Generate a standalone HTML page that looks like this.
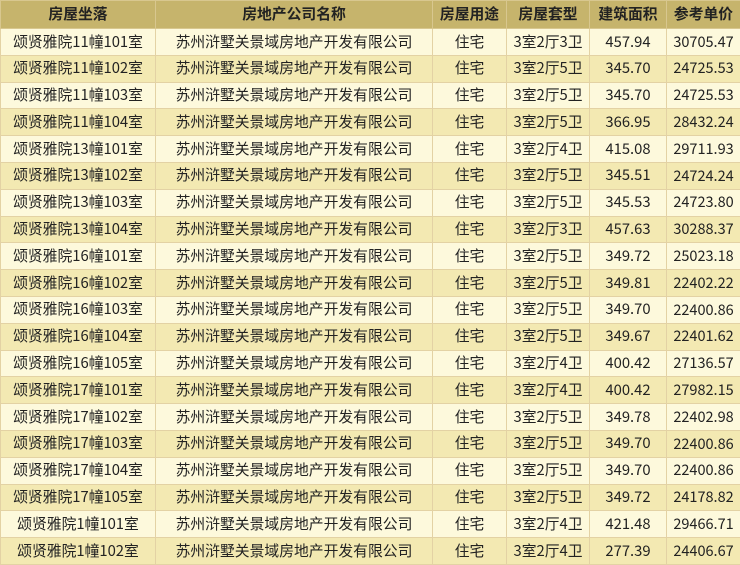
<!DOCTYPE html>
<html><head><meta charset="utf-8"><style>
body{margin:0;width:740px;height:559px;overflow:hidden;background:#fdf9dc;font-family:"Noto Sans CJK SC","Liberation Sans",sans-serif;}
table{border-collapse:collapse;table-layout:fixed;width:740px;position:absolute;left:0;top:0}
td,th{border:1px solid #e3d2a4;text-align:center;font-size:14.8px;color:#222;padding:0;white-space:nowrap;line-height:1}
td:last-child{font-size:14.5px}
th{background:#c6b46c;height:27px;font-weight:bold;color:#222;border-color:#d8c78f}
td{height:25.8px}
tr:nth-child(even) td{background:#fdf9dc}
tr:nth-child(odd) td{background:#f3e9b2}
</style></head><body>
<table>
<colgroup><col style="width:155px"><col style="width:277px"><col style="width:74px"><col style="width:83px"><col style="width:77px"><col style="width:74px"></colgroup>
<tr><th>房屋坐落</th><th>房地产公司名称</th><th>房屋用途</th><th>房屋套型</th><th>建筑面积</th><th>参考单价</th></tr>
<tr><td>颂贤雅院11幢101室</td><td>苏州浒墅关景域房地产开发有限公司</td><td>住宅</td><td>3室2厅3卫</td><td>457.94</td><td>30705.47</td></tr>
<tr><td>颂贤雅院11幢102室</td><td>苏州浒墅关景域房地产开发有限公司</td><td>住宅</td><td>3室2厅5卫</td><td>345.70</td><td>24725.53</td></tr>
<tr><td>颂贤雅院11幢103室</td><td>苏州浒墅关景域房地产开发有限公司</td><td>住宅</td><td>3室2厅5卫</td><td>345.70</td><td>24725.53</td></tr>
<tr><td>颂贤雅院11幢104室</td><td>苏州浒墅关景域房地产开发有限公司</td><td>住宅</td><td>3室2厅5卫</td><td>366.95</td><td>28432.24</td></tr>
<tr><td>颂贤雅院13幢101室</td><td>苏州浒墅关景域房地产开发有限公司</td><td>住宅</td><td>3室2厅4卫</td><td>415.08</td><td>29711.93</td></tr>
<tr><td>颂贤雅院13幢102室</td><td>苏州浒墅关景域房地产开发有限公司</td><td>住宅</td><td>3室2厅5卫</td><td>345.51</td><td>24724.24</td></tr>
<tr><td>颂贤雅院13幢103室</td><td>苏州浒墅关景域房地产开发有限公司</td><td>住宅</td><td>3室2厅5卫</td><td>345.53</td><td>24723.80</td></tr>
<tr><td>颂贤雅院13幢104室</td><td>苏州浒墅关景域房地产开发有限公司</td><td>住宅</td><td>3室2厅3卫</td><td>457.63</td><td>30288.37</td></tr>
<tr><td>颂贤雅院16幢101室</td><td>苏州浒墅关景域房地产开发有限公司</td><td>住宅</td><td>3室2厅5卫</td><td>349.72</td><td>25023.18</td></tr>
<tr><td>颂贤雅院16幢102室</td><td>苏州浒墅关景域房地产开发有限公司</td><td>住宅</td><td>3室2厅5卫</td><td>349.81</td><td>22402.22</td></tr>
<tr><td>颂贤雅院16幢103室</td><td>苏州浒墅关景域房地产开发有限公司</td><td>住宅</td><td>3室2厅5卫</td><td>349.70</td><td>22400.86</td></tr>
<tr><td>颂贤雅院16幢104室</td><td>苏州浒墅关景域房地产开发有限公司</td><td>住宅</td><td>3室2厅5卫</td><td>349.67</td><td>22401.62</td></tr>
<tr><td>颂贤雅院16幢105室</td><td>苏州浒墅关景域房地产开发有限公司</td><td>住宅</td><td>3室2厅4卫</td><td>400.42</td><td>27136.57</td></tr>
<tr><td>颂贤雅院17幢101室</td><td>苏州浒墅关景域房地产开发有限公司</td><td>住宅</td><td>3室2厅4卫</td><td>400.42</td><td>27982.15</td></tr>
<tr><td>颂贤雅院17幢102室</td><td>苏州浒墅关景域房地产开发有限公司</td><td>住宅</td><td>3室2厅5卫</td><td>349.78</td><td>22402.98</td></tr>
<tr><td>颂贤雅院17幢103室</td><td>苏州浒墅关景域房地产开发有限公司</td><td>住宅</td><td>3室2厅5卫</td><td>349.70</td><td>22400.86</td></tr>
<tr><td>颂贤雅院17幢104室</td><td>苏州浒墅关景域房地产开发有限公司</td><td>住宅</td><td>3室2厅5卫</td><td>349.70</td><td>22400.86</td></tr>
<tr><td>颂贤雅院17幢105室</td><td>苏州浒墅关景域房地产开发有限公司</td><td>住宅</td><td>3室2厅5卫</td><td>349.72</td><td>24178.82</td></tr>
<tr><td>颂贤雅院1幢101室</td><td>苏州浒墅关景域房地产开发有限公司</td><td>住宅</td><td>3室2厅4卫</td><td>421.48</td><td>29466.71</td></tr>
<tr><td>颂贤雅院1幢102室</td><td>苏州浒墅关景域房地产开发有限公司</td><td>住宅</td><td>3室2厅4卫</td><td>277.39</td><td>24406.67</td></tr>
</table>
</body></html>
